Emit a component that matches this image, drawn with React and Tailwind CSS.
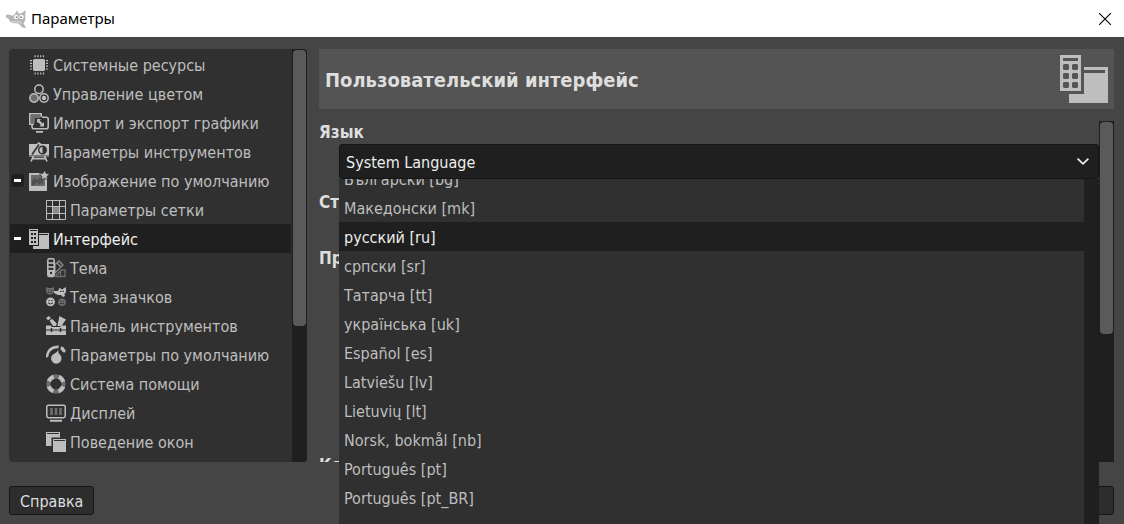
import { clsx } from 'clsx';

const LIGHT = '#bebebe';
const DIM = '#6e6e6e';

const Svg = ({ children, className = 'w-5 h-5' }) => (
  <svg viewBox="0 0 20 20" className={clsx('shrink-0', className)} fill="none" aria-hidden="true">
    {children}
  </svg>
);

const WilberIcon = ({ className }) => (
  <svg viewBox="0 0 20 18" className={clsx('shrink-0', className)} fill="none" aria-hidden="true">
    <path d="M19.8 0 15.4 3.2 12.6 3.4 11 .2 8.8 4.2 6.6 5.8 2.2 4.6.1 4.9 0 7.6 2.3 8.6 4.4 12 8 13.2 12.4 13.6 16.4 17.6 20 18 18.6 15 17.4 13.4 19.4 10 19.2 5Z" fill="#b5b5b5" />
    <circle cx="10.2" cy="7" r="2.2" fill="#fff" />
    <circle cx="15.4" cy="7" r="2.2" fill="#fff" />
    <circle cx="10.6" cy="7.2" r="1" fill="#888" />
    <circle cx="15" cy="7.2" r="1" fill="#888" />
    <path d="M6.5 11.4c3 1 5.4.8 7.4.3l2.4 2.2" stroke="#eee" strokeWidth=".8" />
  </svg>
);

const CpuIcon = () => (
  <Svg>
    <rect x="4" y="4" width="12" height="12" rx="1.5" fill={LIGHT} />
    <path d="M2 5v10M18 5v10M5.5 1.3h10M5.5 18.5h10" stroke={LIGHT} strokeWidth="2" strokeDasharray="1.2 1.6" />
  </Svg>
);

const ColorIcon = () => (
  <Svg>
    <circle cx="10" cy="5.2" r="4.2" stroke={LIGHT} strokeWidth="1.5" />
    <circle cx="5" cy="14" r="4.2" fill={DIM} stroke={LIGHT} strokeWidth="1.5" />
    <circle cx="15" cy="14" r="4.2" stroke={LIGHT} strokeWidth="1.5" />
    <circle cx="15" cy="14" r="2.2" fill={LIGHT} />
  </Svg>
);

const ImportIcon = () => (
  <Svg>
    <path d="M2 2h9v3H6v5H2z" fill={DIM} />
    <path d="M5 11.2H.8V.8h11.4V4" stroke={LIGHT} strokeWidth="1.6" />
    <path d="M13 4.2h4.2q2 0 2 2v7.6q0 2-2 2H5q-2 0-2-2v-2" stroke={LIGHT} strokeWidth="1.6" />
    <path d="M7 18.8h7" stroke={LIGHT} strokeWidth="1.8" />
    <path d="M8 6h4l-1.4 1.4 3 3L15 9v4.5h-4.5l1.4-1.4-3-3L8 10z" fill={LIGHT} />
  </Svg>
);

const EaselIcon = () => (
  <Svg>
    <path d="M0 2h7.5L10 0l2.5 2H20v13H0z" fill={LIGHT} />
    <path d="M3 12.5 10 2.5" stroke="#303030" strokeWidth="1.6" />
    <circle cx="13.5" cy="8" r="3.8" fill={LIGHT} stroke="#303030" strokeWidth="1.4" />
    <path d="M13.5 4.2a3.8 3.8 0 0 1 0 7.6z" fill="#303030" />
    <path d="M0 14h20" stroke="#303030" strokeWidth="1" />
    <path d="M4.5 14 2 19.5M15.5 14l2.5 5.5M3.5 16.7h13" stroke={LIGHT} strokeWidth="1.7" />
  </Svg>
);

const ImageIcon = () => (
  <Svg>
    <path d="M0 2h18v18H0z" fill={LIGHT} />
    <path d="M2 4h14v11H2z" fill="#6a6a6a" />
    <path d="M3 14v-4l2-3 3 2 3-2 3 2v5l-2-2-2 2-2-3-2 3z" fill="#505050" />
    <path d="m15.5-.8 1.6 3.2 3.5.5-2.5 2.5.6 3.5-3.2-1.6-3.2 1.6.6-3.5-2.5-2.5 3.5-.5z" fill={LIGHT} stroke="#303030" strokeWidth=".8" />
  </Svg>
);

const GridIcon = () => (
  <Svg>
    <path d="M7 7h6v6H7z" fill="#8c8c8c" />
    <path d="M.5.5h19v19H.5zM6.5 1v18M13.5 1v18M1 6.5h18M1 13.5h18" stroke={LIGHT} />
  </Svg>
);

const InterfaceIcon = () => (
  <Svg>
    <path
      fillRule="evenodd"
      fill={LIGHT}
      d="M0 0h9v16H0zM1 1v1h7V1zM10 4h10v16H4v-3h6zM10 5v1h9V5z
        M2 4h2v2H2zM5 4h2v2H5zM2 8h2v2H2zM5 8h2v2H5zM2 12h2v2H2zM5 12h2v2H5z"
    />
  </Svg>
);

const InterfaceIconLarge = () => (
  <svg viewBox="0 0 48 48" className="h-12 w-12 shrink-0" aria-hidden="true">
    <path
      fillRule="evenodd"
      fill={LIGHT}
      d="M0 0h21v36H0zM3 3v3h15V3zM24 12h24v36H9v-9h15V18h21v-3H24z
        M4 9h4l1 1v4l-1 1H4l-1-1v-4zM13 9h4l1 1v4l-1 1h-4l-1-1v-4z
        M4 18h4l1 1v4l-1 1H4l-1-1v-4zM13 18h4l1 1v4l-1 1h-4l-1-1v-4z
        M4 27h4l1 1v4l-1 1H4l-1-1v-4zM13 27h4l1 1v4l-1 1h-4l-1-1v-4z"
    />
  </svg>
);

const ThemeIcon = () => (
  <Svg>
    <path d="M9 6.5 13 3l4 4-8 8z" stroke="#8c8c8c" strokeWidth="1.3" />
    <path d="m11 5 4 4" stroke="#8c8c8c" strokeWidth="1.2" />
    <path d="M9 18.5h10V12h-3.5L9 18.5M14.5 13v5" stroke={DIM} strokeWidth="1.3" />
    <rect x="1.8" y=".8" width="6.4" height="17.8" rx="1.6" stroke={LIGHT} strokeWidth="1.5" />
    <path d="M2 5h6M2 9h6" stroke={LIGHT} strokeWidth="1.3" />
    <path d="M2 12h6v5q-3 3-6 0z" fill={LIGHT} />
    <circle cx="5" cy="15" r="1.2" fill="#303030" />
  </Svg>
);

const IconThemeIcon = () => (
  <Svg>
    <path d="M0 0l2 1h4l2-1v4q-1 3.6-4 3.6T0 4z" fill={DIM} />
    <path d="M1.6 3.2h1.6M4.8 3.2h1.6M2 5.4h4" stroke="#303030" strokeWidth=".8" />
    <path d="m20 0-4 2.6L13.5.8 12 4 8 4v2l4 2h3l2 2 2-1-.6-2L20 5z" fill={LIGHT} />
    <path d="M14 4.4h1.4M16.6 4.4H18" stroke="#303030" strokeWidth="1.2" />
    <circle cx="4.5" cy="14.8" r="4.4" fill={LIGHT} />
    <path d="M2.4 13.6h1.4M5.2 13.6h1.4M2 15.8q2.5 2.4 5 0" stroke="#303030" strokeWidth="1" />
    <circle cx="16" cy="15.2" r="3.8" fill={DIM} />
    <path d="M14 14.3h1.3M16.8 14.3H18M14 16.6h4" stroke="#303030" strokeWidth=".9" />
  </Svg>
);

const ToolboxIcon = () => (
  <Svg>
    <path d="m0 2 3-2 2 2.2-3 2zM3.6 4.8l2.4-2 5 5L9.5 10H7zM13.4 0 20 3.6 15.4 10h-4z" fill={LIGHT} />
    <path d="M0 9.5h4.5l1.5 1.5h8l1.5-1.5H20V19H0z" fill={LIGHT} />
    <path d="M0 14h20" stroke="#303030" strokeWidth="1" />
    <path d="M5.5 12v4M14.5 12v4" stroke="#303030" strokeWidth="1.6" />
  </Svg>
);

const DefaultsIcon = () => (
  <Svg>
    <path d="M0 13C-.5 5 5 .2 13 .4l-.6 2.8C7 3 3 6 2.4 11.4z" fill={LIGHT} />
    <path d="m15 1.6 2.2.4 2.4 3.6-.6 2-2-.4-2.6-3.2z" fill={LIGHT} />
    <path d="M12.4 4.6q-.6 3.4 1.4 5a5.2 5.2 0 1 1-8 1.2q1.4-2 3.2-2.6 2.4-1 3.4-3.6Z" fill={LIGHT} />
  </Svg>
);

const HelpIcon = () => (
  <Svg>
    <circle cx="10" cy="10" r="7.6" stroke={DIM} strokeWidth="4.2" />
    <circle cx="10" cy="10" r="7.6" stroke={LIGHT} strokeWidth="4.2" strokeDasharray="6.8 5.14" strokeDashoffset="-2.57" />
  </Svg>
);

const DisplayIcon = () => (
  <Svg>
    <rect x=".8" y="2.3" width="18.4" height="12.4" rx="1.6" stroke={LIGHT} strokeWidth="1.5" />
    <path d="M5.5 5v7M10 5v7M14.5 5v7" stroke={DIM} strokeWidth="2.6" />
    <path d="M4 17.7h12" stroke={LIGHT} strokeWidth="2" />
  </Svg>
);

const WindowsIcon = () => (
  <Svg>
    <path d="M0 0h14v5.5H5.5V14H0z" fill={LIGHT} />
    <path d="M1 1.5h12" stroke="#303030" />
    <path d="M7 7h13v13H7z" fill={LIGHT} />
    <path d="M8 8.5h11" stroke="#303030" />
  </Svg>
);

const categories = [
  { label: 'Системные ресурсы', icon: CpuIcon },
  { label: 'Управление цветом', icon: ColorIcon },
  { label: 'Импорт и экспорт графики', icon: ImportIcon },
  { label: 'Параметры инструментов', icon: EaselIcon },
  { label: 'Изображение по умолчанию', icon: ImageIcon, open: true },
  { label: 'Параметры сетки', icon: GridIcon, child: true },
  { label: 'Интерфейс', icon: InterfaceIcon, open: true, active: true },
  { label: 'Тема', icon: ThemeIcon, child: true },
  { label: 'Тема значков', icon: IconThemeIcon, child: true },
  { label: 'Панель инструментов', icon: ToolboxIcon, child: true },
  { label: 'Параметры по умолчанию', icon: DefaultsIcon, child: true },
  { label: 'Система помощи', icon: HelpIcon, child: true },
  { label: 'Дисплей', icon: DisplayIcon, child: true },
  { label: 'Поведение окон', icon: WindowsIcon, child: true },
];

const languages = [
  'Български [bg]',
  'Македонски [mk]',
  'русский [ru]',
  'српски [sr]',
  'Татарча [tt]',
  'українська [uk]',
  'Español [es]',
  'Latviešu [lv]',
  'Lietuvių [lt]',
  'Norsk, bokmål [nb]',
  'Português [pt]',
  'Português [pt_BR]',
];

function TitleBar() {
  return (
    <header className="flex h-[37px] shrink-0 items-center bg-white pl-1.5 pr-3 text-black">
      <WilberIcon className="h-[18px] w-5" />
      <h1 className="ml-[5px] flex-1 font-['Noto_Sans',sans-serif] text-[15px]">Параметры</h1>
      <button aria-label="Закрыть" className="p-px">
        <svg viewBox="0 0 12 12" className="h-3 w-3" stroke="currentColor" strokeWidth="1.1" aria-hidden="true">
          <path d="M0 0l12 12M12 0 0 12" />
        </svg>
      </button>
    </header>
  );
}

function Sidebar() {
  return (
    <nav className="flex w-[298px] shrink-0 overflow-hidden rounded-sm bg-[#303030]">
      <ul className="flex-1 p-px">
        {categories.map(({ label, icon: Icon, child, open, active }) => (
          <li
            key={label}
            className={clsx(
              'flex h-[29px] items-center',
              active ? 'bg-[#1f1f1f] text-[#eeeeec]' : 'text-[#bebebe]',
              child ? 'pl-9' : open ? 'pl-px' : 'pl-[19px]'
            )}
          >
            {open && (
              <button
                aria-label="Свернуть"
                className="mr-[5px] flex h-[13px] w-[13px] items-center justify-center rounded-[3px] bg-[#1f1f1f]"
              >
                <span className="h-[3px] w-[7px] bg-white" />
              </button>
            )}
            <a href="#" className="flex items-center gap-1 whitespace-nowrap">
              <Icon />
              <span className="pt-0.5">{label}</span>
            </a>
          </li>
        ))}
      </ul>
      <div className="w-[15px] bg-[#1f1f1f] p-px">
        <div className="h-[276px] rounded-sm bg-[#5a5a5a]" />
      </div>
    </nav>
  );
}

function LanguageSelect() {
  return (
    <div className="relative ml-5">
      <select
        id="language"
        defaultValue="system"
        className="block h-[35px] w-full appearance-none rounded-[3px] border border-[#151515] bg-[#1f1f1f] px-1.5 pt-0.5 text-[#eeeeec] outline-none"
      >
        <option value="system">System Language</option>
      </select>
      <svg
        viewBox="0 0 12 7"
        className="pointer-events-none absolute right-2.5 top-[14px] h-[7px] w-3"
        fill="none"
        stroke="#eeeeec"
        strokeWidth="1.7"
        aria-hidden="true"
      >
        <path d="M.6.6 6 5.8 11.4.6" />
      </svg>

      {/* Open list, scrolled part way down */}
      <div className="absolute inset-x-0 top-full z-10 flex h-[400px] overflow-hidden bg-[#303030]">
        <ul role="listbox" aria-label="Язык" className="-mt-[15px] flex-1 text-[#bebebe]">
          {languages.map((lang) => (
            <li
              key={lang}
              role="option"
              aria-selected={lang === 'русский [ru]'}
              className="flex h-[29px] items-center px-[5px] pt-0.5 aria-selected:bg-[#1f1f1f] aria-selected:text-[#eeeeec]"
            >
              {lang}
            </li>
          ))}
        </ul>
        <div className="w-[15px] bg-[#1f1f1f]" />
      </div>
    </div>
  );
}

function InterfacePanel() {
  return (
    <section className="flex min-w-0 flex-1 flex-col gap-3 text-[17px] text-[#dedede]">
      <div className="flex h-[60px] shrink-0 items-center justify-between bg-[#545454] px-1.5">
        <h2 className="pt-0.5 text-xl font-bold">Пользовательский интерфейс</h2>
        <InterfaceIconLarge />
      </div>
      <div className="flex min-h-0 flex-1">
        <div className="flex min-w-0 flex-1 flex-col">
          <label htmlFor="language" className="font-bold leading-[23px]">Язык</label>
          <div className="text-base">
            <LanguageSelect />
          </div>
          <div className="min-h-0 flex-1 overflow-hidden font-bold leading-6">
            <h3 className="mt-[11px]">Ст</h3>
            <h3 className="mt-8">Пр</h3>
            <h3 className="mt-[183px]">Кл</h3>
          </div>
        </div>
        <div className="w-[15px] bg-[#1f1f1f] p-px pt-0">
          <div className="h-[213px] rounded-sm border-t border-[#1f1f1f] bg-[#5a5a5a]" />
        </div>
      </div>
    </section>
  );
}

const footerButton = 'h-[29px] rounded-[3px] border border-[#151515] bg-[#2d2d2d] pt-0.5 text-[#dedede]';

export default function App() {
  return (
    <div className="flex h-screen flex-col overflow-hidden bg-[#454545] font-['DejaVu_Sans_Condensed','DejaVu_Sans',sans-serif] text-base">
      <TitleBar />
      <main className="flex min-h-0 flex-1 gap-3 pl-[9px] pr-2.5 pt-3">
        <Sidebar />
        <InterfacePanel />
      </main>
      <footer className="flex shrink-0 justify-between pb-[9px] pl-[9px] pr-2.5 pt-6">
        <button className={clsx(footerButton, 'px-2.5')}>Справка</button>
        <button className={clsx(footerButton, 'px-[14px]')}>Отмена</button>
      </footer>
    </div>
  );
}
